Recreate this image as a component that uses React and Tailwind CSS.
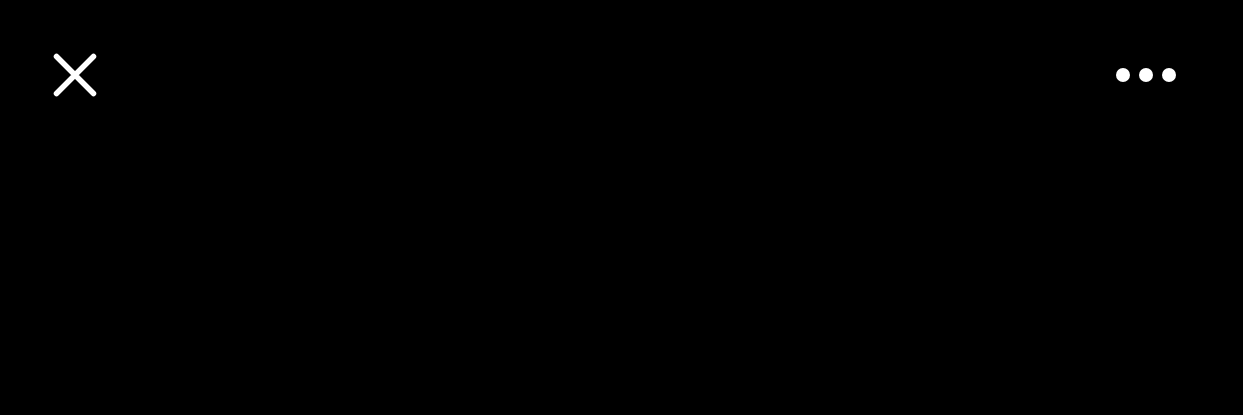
import React from 'react'

const App = () => {
  return (
    <div className="w-[1243px] h-[415px] bg-black" style={{ fontFamily: '"Liberation Sans", sans-serif' }}>
      <div className="flex justify-between items-center pt-[51px] pl-[51px] pr-[67px]">
        <button className="w-12 h-12 flex items-center justify-center">
          <svg width="48" height="48" viewBox="0 0 48 48" fill="none">
            <path d="M5.5 5.5 L42.5 42.5 M42.5 5.5 L5.5 42.5" stroke="white" strokeWidth="5.5" strokeLinecap="round" />
          </svg>
        </button>
        <button className="flex items-center gap-[9px]">
          <span className="w-[14px] h-[14px] rounded-full bg-white" />
          <span className="w-[14px] h-[14px] rounded-full bg-white" />
          <span className="w-[14px] h-[14px] rounded-full bg-white" />
        </button>
      </div>
    </div>
  )
}

export default App
